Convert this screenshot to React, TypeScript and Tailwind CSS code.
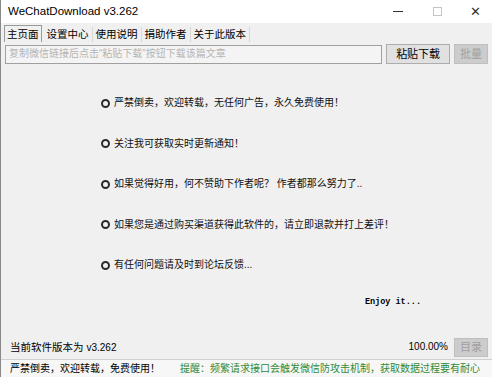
import React from "react";

const font = { fontFamily: '"Liberation Sans", "Noto Sans CJK SC", sans-serif' };

function Bullet({ children }: { children: React.ReactNode }) {
  return (
    <div className="flex items-center h-[14px]">
      <span className="inline-block w-[9px] h-[9px] rounded-full border-[2.5px] border-[#2a2a2a] mr-[4px]" />
      <span className="text-[10px] text-[#111] leading-none whitespace-nowrap">{children}</span>
    </div>
  );
}

export default function App() {
  return (
    <div className="w-[492px] h-[377px] bg-[#f0f0f0] flex flex-col overflow-hidden border-l border-[#8a8a8a]" style={font}>
      {/* title bar */}
      <div className="h-[23px] bg-white flex items-center">
        <span className="ml-[7px] text-[11.5px] text-black">WeChatDownload v3.262</span>
        <div className="ml-auto flex items-center h-full text-[#222]">
          <span className="w-[36px] flex justify-center"><span className="block w-[10px] h-px bg-[#333]" /></span>
          <span className="w-[42px] flex justify-center"><span className="block w-[9px] h-[9px] border border-[#c4c4c4]" /></span>
          <span className="w-[34px] flex justify-center text-[13px] leading-none font-light text-[#333]">✕</span>
        </div>
      </div>
      {/* tabs */}
      <div className="flex items-end h-[18px] pl-[3px] mt-[1px] text-[10.5px] leading-none text-black">
        <div className="h-[17px] px-[2px] border border-[#9a9a9a] border-b-0 bg-[#f0f0f0] flex items-center">主页面</div>
        <div className="h-[15px] px-[3px] ml-[2px] flex items-center border-r border-[#d8d8d8]">设置中心</div>
        <div className="h-[15px] px-[3px] flex items-center border-r border-[#d8d8d8]">使用说明</div>
        <div className="h-[15px] px-[3px] flex items-center border-r border-[#d8d8d8]">捐助作者</div>
        <div className="h-[15px] px-[3px] flex items-center border-r border-[#d8d8d8]">关于此版本</div>
      </div>
      {/* input row */}
      <div className="flex items-center mt-[1px] pl-[4px] pr-[4px] gap-[4px] h-[22px]">
        <div className="w-[378px] h-[19px] border border-[#a0a0a0] bg-[#f4f4f4] flex items-center px-[3px] text-[10px] text-[#b5b5b5] leading-none whitespace-nowrap">
          复制微信链接后点击“粘贴下载”按钮下载该篇文章
        </div>
        <div className="w-[64px] h-[20px] border border-[#adadad] bg-[#e1e1e1] flex items-center justify-center text-[11px] text-black leading-none">粘贴下载</div>
        <div className="w-[34px] h-[20px] border border-[#bfbfbf] bg-[#cccccc] flex items-center justify-center text-[11px] text-[#a0a0a0] leading-none">批量</div>
      </div>
      {/* content */}
      <div className="flex flex-col pl-[100px] pt-[31px] gap-[26.5px]">
        <Bullet>严禁倒卖，欢迎转载，无任何广告，永久免费使用！</Bullet>
        <Bullet>关注我可获取实时更新通知！</Bullet>
        <Bullet>如果觉得好用，何不赞助下作者呢？ 作者都那么努力了..</Bullet>
        <Bullet>如果您是通过购买渠道获得此软件的，请立即退款并打上差评！</Bullet>
        <Bullet>有任何问题请及时到论坛反馈...</Bullet>
      </div>
      <div className="flex justify-end pr-[71px] mt-[26px]">
        <span className="text-[8.5px] font-bold text-black leading-none" style={{ fontFamily: '"Liberation Mono", monospace' }}>Enjoy it...</span>
      </div>
      {/* bottom row */}
      <div className="flex items-center mt-auto h-[20px] pl-[9px] pr-[4px] mb-[2px]">
        <span className="text-[10.5px] text-black leading-none">当前软件版本为 <span className="text-[10px]">v3.262</span></span>
        <span className="ml-auto text-[10px] text-black leading-none mr-[6px]">100.00%</span>
        <div className="w-[34px] h-[19px] border border-[#bfbfbf] bg-[#cccccc] flex items-center justify-center text-[11px] text-[#a0a0a0] leading-none">目录</div>
      </div>
      {/* status bar */}
      <div className="h-[18px] bg-[#f7f7f7] border-t border-[#d0d0d0] flex items-center pl-[9px] text-[10px] leading-none whitespace-nowrap">
        <span className="text-black">严禁倒卖，欢迎转载，免费使用！</span>
        <span className="ml-[20px] text-[#2e8b3a]">提醒：频繁请求接口会触发微信防攻击机制，获取数据过程要有耐心</span>
      </div>
    </div>
  );
}
